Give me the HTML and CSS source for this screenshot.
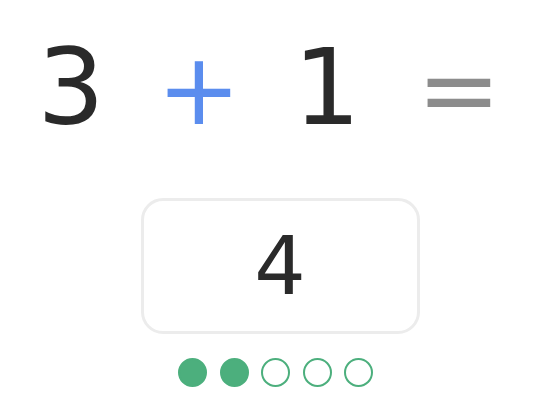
FILE: index.html
```html
<!DOCTYPE html>
<html>
<head>
<meta charset="utf-8">
<link rel="stylesheet" href="styles.css">
</head>
<body>
<main class="quiz">
  <div class="equation">
    <span class="term num">3</span>
    <span class="term op plus">+</span>
    <span class="term num">1</span>
    <span class="term op equals">=</span>
  </div>
  <div class="answer"><span class="answer-value">4</span></div>
  <div class="progress">
    <span class="dot done"></span>
    <span class="dot done"></span>
    <span class="dot"></span>
    <span class="dot"></span>
    <span class="dot"></span>
  </div>
</main>
</body>
</html>
```

FILE: styles.css
```css
html, body {
  margin: 0;
  padding: 0;
  background: #ffffff;
}

body {
  width: 560px;
  height: 420px;
  overflow: hidden;
  font-family: "DejaVu Sans", "Liberation Sans", sans-serif;
}

.quiz {
  display: flex;
  flex-direction: column;
  align-items: center;
}

.equation {
  align-self: flex-start;
  display: grid;
  grid-template-columns: repeat(4, 128px);
  margin-left: 7px;
  padding-top: 35px;
  height: 163px;
  box-sizing: border-box;
  align-items: baseline;
}

.term {
  text-align: center;
  line-height: 106px;
}

.num {
  font-size: 106px;
  color: #2a2a2a;
}

.op {
  font-size: 100px;
}

.plus {
  color: #5b8dee;
}

.equals {
  color: #8c8c8c;
  padding-left: 8px;
}

.answer {
  margin-top: 35px;
  width: 279px;
  height: 136px;
  box-sizing: border-box;
  border: 3px solid #ececec;
  border-radius: 22px;
  display: flex;
  align-items: center;
  justify-content: center;
}

.answer-value {
  font-size: 81px;
  line-height: 81px;
  color: #2a2a2a;
  margin-top: 1px;
}

.progress {
  margin-top: 24px;
  margin-right: 9px;
  display: flex;
  gap: 12.5px;
}

.dot {
  width: 29px;
  height: 29px;
  box-sizing: border-box;
  border-radius: 50%;
  border: 2px solid #4caf7d;
  background: #ffffff;
}

.dot.done {
  background: #4caf7d;
}
```
